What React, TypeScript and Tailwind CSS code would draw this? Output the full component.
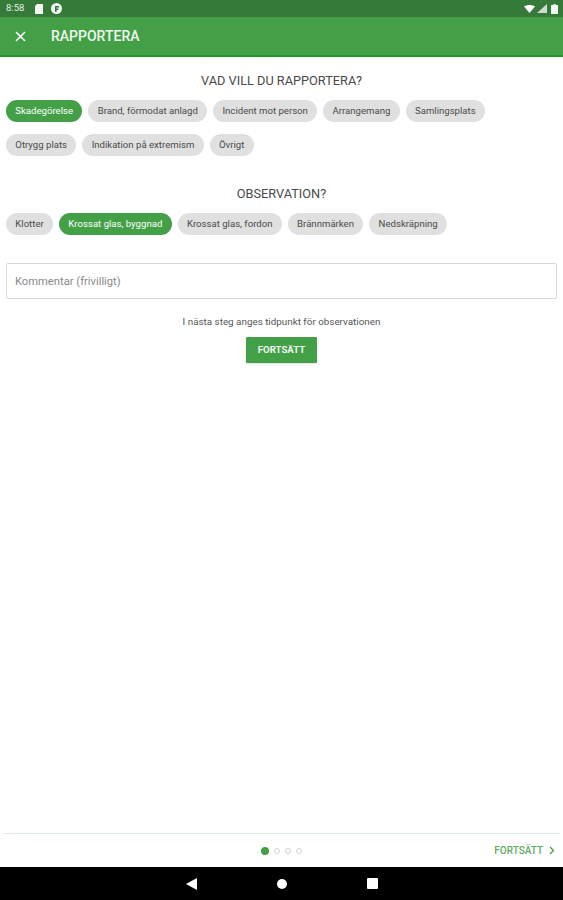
import React from "react";

const row1 = ["Skadegörelse", "Brand, förmodat anlagd", "Incident mot person", "Arrangemang", "Samlingsplats"];
const row2 = ["Otrygg plats", "Indikation på extremism", "Övrigt"];
const row3 = ["Klotter", "Krossat glas, byggnad", "Krossat glas, fordon", "Brännmärken", "Nedskräpning"];

const Chip = ({ label, active }: { label: string; active?: boolean }) => (
  <div
    className={
      active
        ? "flex h-[22px] items-center rounded-full bg-[#43a047] px-[9.3px] text-[9.6px] whitespace-nowrap text-white"
        : "flex h-[22px] items-center rounded-full bg-[#e0e0e0] px-[9.3px] text-[9.6px] whitespace-nowrap text-[#4a4a4a]"
    }
  >
    {label}
  </div>
);

const StatusBar = () => (
  <div className="flex h-[17px] items-center justify-between bg-[#357a38] pr-[5px] pl-[6px]">
    <div className="flex items-center">
      <span className="w-[29px] text-[9.5px] text-[#e3eee3]">8:58</span>
      <svg width="8" height="10" viewBox="0 0 8 10" className="mr-[8px]">
        <path d="M2 0h6v10H0V2z" fill="#f4f8f4" />
      </svg>
      <svg width="11" height="11" viewBox="0 0 11 11">
        <circle cx="5.5" cy="5.5" r="5.5" fill="#f4f8f4" />
        <path d="M4 3h4v1.5H5.6v1H7.4V7H5.6v2H4z" fill="#357a38" />
      </svg>
    </div>
    <div className="flex items-center gap-[2px]">
      <svg width="11" height="8" viewBox="0 0 11 8">
        <path d="M0 1.5C3 -.5 8 -.5 11 1.5L5.5 8z" fill="#fff" />
      </svg>
      <svg width="10" height="9" viewBox="0 0 10 9" className="mr-[2px]">
        <path d="M10 0v9H0z" fill="#cfdccf" />
      </svg>
      <svg width="7" height="10" viewBox="0 0 7 10">
        <path d="M2.5 0h2v1H7v9H0V1h2.5z" fill="#f4f8f4" />
      </svg>
    </div>
  </div>
);

const AppBar = () => (
  <div className="flex h-[40px] items-center border-b-2 border-[#1f9a2a] bg-[#43a047] pt-[1px] pl-[15px]">
    <svg width="11" height="11" viewBox="0 0 11 11" className="mr-[25px]">
      <path d="M1 1l9 9M10 1l-9 9" stroke="#fff" strokeWidth="1.6" fill="none" />
    </svg>
    <span className="text-[14px] font-medium text-[#f1f8f1]">RAPPORTERA</span>
  </div>
);

const NavBar = () => (
  <div className="flex h-[33px] items-center justify-center gap-[80px] bg-black">
    <svg width="11" height="12" viewBox="0 0 11 12">
      <path d="M11 0v12L0 6z" fill="#fff" />
    </svg>
    <div className="h-[10px] w-[10px] rounded-full bg-white" />
    <div className="h-[11px] w-[11px] rounded-[1px] bg-white" />
  </div>
);

export default function App() {
  return (
    <div className="flex h-[900px] w-[563px] flex-col bg-white font-['Roboto',sans-serif]">
      <StatusBar />
      <AppBar />
      <div className="flex flex-1 flex-col px-[6px]">
        <h2 className="mt-[16px] text-center text-[12.75px] leading-[16px] text-[#4a4a4a]">VAD VILL DU RAPPORTERA?</h2>
        <div className="mt-[11px] flex gap-[6px]">
          {row1.map((c, i) => (
            <Chip key={c} label={c} active={i === 0} />
          ))}
        </div>
        <div className="mt-[12px] flex gap-[6px]">
          {row2.map((c) => (
            <Chip key={c} label={c} />
          ))}
        </div>
        <h2 className="mt-[30px] text-center text-[12.75px] leading-[16px] text-[#4a4a4a]">OBSERVATION?</h2>
        <div className="mt-[11px] flex gap-[6px]">
          {row3.map((c, i) => (
            <Chip key={c} label={c} active={i === 1} />
          ))}
        </div>
        <div className="mt-[28px] flex h-[36px] items-center rounded-[2px] border border-[#d8d8d8] px-[8px] pt-[2px] text-[11.2px] text-[#8a8a8a]">
          Kommentar (frivilligt)
        </div>
        <p className="mt-[17px] text-center text-[9.85px] leading-[12px] text-[#555555]">
          I nästa steg anges tidpunkt för observationen
        </p>
        <button className="mx-auto mt-[9px] flex h-[26px] w-[71px] items-center justify-center rounded-[1px] bg-[#43a047] text-[9.6px] font-bold text-[#f1f8f1] shadow-sm">
          FORTSÄTT
        </button>
      </div>
      <div className="mx-[3px] flex h-[34px] items-center border-t border-[#dcebdc] pr-[5px]">
        <div className="ml-[258px] flex items-center gap-[5px]">
          <div className="h-[8px] w-[8px] rounded-full bg-[#43a047]" />
          <div className="h-[6px] w-[6px] rounded-full border border-[#d0d0d0]" />
          <div className="h-[6px] w-[6px] rounded-full border border-[#d0d0d0]" />
          <div className="h-[6px] w-[6px] rounded-full border border-[#d0d0d0]" />
        </div>
        <div className="ml-auto flex items-center gap-[6px]">
          <span className="text-[10px] font-medium text-[#5cae60]">FORTSÄTT</span>
          <svg width="6" height="9" viewBox="0 0 6 9">
            <path d="M1 1l3.5 3.5L1 8" stroke="#43a047" strokeWidth="1.3" fill="none" />
          </svg>
        </div>
      </div>
      <NavBar />
    </div>
  );
}
